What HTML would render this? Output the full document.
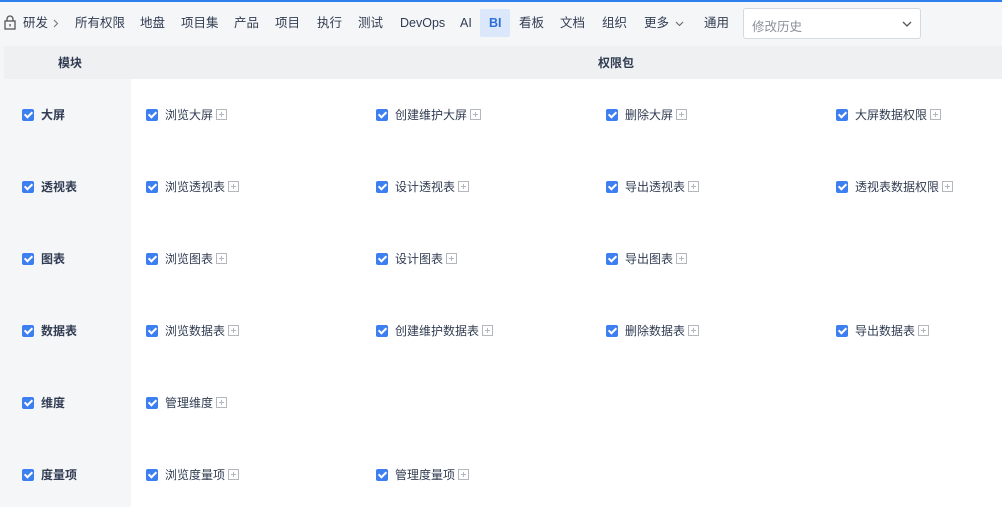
<!DOCTYPE html><html><head><meta charset="utf-8"><style>
*{margin:0;padding:0;box-sizing:border-box}
body{width:1002px;height:507px;overflow:hidden;background:#f5f6f8;font-family:"Liberation Sans","Noto Sans CJK SC",sans-serif;font-size:12px;color:#313c52;position:relative}
.top{position:absolute;left:0;top:0;width:1002px;height:2px;background:#2e7ef0}
.n{position:absolute;top:15px;line-height:16px;font-size:12.5px}
.bi{position:absolute;left:480px;top:9px;width:30px;height:28px;background:#dbe8fb;border-radius:2px}
.dd{position:absolute;left:743px;top:8px;width:178px;height:31px;background:#fff;border:1px solid #d6d9e2;border-radius:3px;color:#8a8f99;padding:7px 8px;font-size:12.5px}
.tbl{position:absolute;left:4px;top:46px;width:998px;height:461px;background:#fff}
.hd{position:absolute;left:0;top:0;width:998px;height:33px;background:#eff0f2;font-weight:bold}
.lc{position:absolute;left:0;top:33px;width:127px;height:428px;background:#f5f6f8}
.i{position:absolute;line-height:16px;white-space:nowrap}
.cb{display:inline-block;width:12px;height:12px;background:#3d7ff0;border-radius:2px;vertical-align:-2px;margin-right:7px;position:relative}
.cb:after{content:"";position:absolute;left:3.5px;top:1px;width:3px;height:6px;border:solid #fff;border-width:0 2px 2px 0;transform:rotate(45deg)}
.p{display:inline-block;width:11px;height:11px;border:1px solid #b4b7bd;vertical-align:-1px;margin-left:3px;position:relative}
.p:before{content:"";position:absolute;left:2px;top:4px;width:5px;height:1px;background:#b4b7bd}
.p:after{content:"";position:absolute;left:4px;top:2px;width:1px;height:5px;background:#b4b7bd}
</style></head><body>
<div class="top"></div>
<svg style="position:absolute;left:4px;top:15px" width="12" height="15" viewBox="0 0 12 15"><rect x="1" y="6" width="10" height="8" fill="none" stroke="#555" stroke-width="1.3"/><path d="M3 6V4a3 3 0 0 1 6 0v2" fill="none" stroke="#555" stroke-width="1.3"/><rect x="5.4" y="9" width="1.3" height="2.5" fill="#555"/></svg>
<div class="n" style="left:23px">研发</div>
<svg style="position:absolute;left:53px;top:19px" width="6" height="9"><path d="M1 1l3.5 3.5L1 8" fill="none" stroke="#777" stroke-width="1.1"/></svg>
<div class="n" style="left:75px">所有权限</div>
<div class="n" style="left:140px">地盘</div>
<div class="n" style="left:181px">项目集</div>
<div class="n" style="left:234px">产品</div>
<div class="n" style="left:275px">项目</div>
<div class="n" style="left:317px">执行</div>
<div class="n" style="left:358px">测试</div>
<div class="n" style="left:400px">DevOps</div>
<div class="n" style="left:460px">AI</div>
<div class="bi"></div>
<div class="n" style="left:489px;font-weight:bold;color:#2e6fd8">BI</div>
<div class="n" style="left:519px">看板</div>
<div class="n" style="left:560px">文档</div>
<div class="n" style="left:602px">组织</div>
<div class="n" style="left:644px">更多</div>
<svg style="position:absolute;left:675px;top:21px" width="9" height="6"><path d="M1 1l3.5 3.5L8 1" fill="none" stroke="#666" stroke-width="1.1"/></svg>
<div class="n" style="left:704px">通用</div>
<div class="dd">修改历史<svg style="position:absolute;right:8px;top:12px" width="10" height="6"><path d="M1 1l4 4 4-4" fill="none" stroke="#555" stroke-width="1.3"/></svg></div>
<div class="tbl">
<div class="hd"><span class="i" style="left:54px;top:9px">模块</span><span class="i" style="left:594px;top:9px">权限包</span></div>
<div class="lc"></div>
</div>
<div id="rows"></div>
<script>
var rows=[["大屏",["浏览大屏","创建维护大屏","删除大屏","大屏数据权限"]],["透视表",["浏览透视表","设计透视表","导出透视表","透视表数据权限"]],["图表",["浏览图表","设计图表","导出图表"]],["数据表",["浏览数据表","创建维护数据表","删除数据表","导出数据表"]],["维度",["管理维度"]],["度量项",["浏览度量项","管理度量项"]]];
var h="";rows.forEach(function(r,k){var y=107+72*k;h+='<div class="i" style="left:22px;top:'+y+'px;font-weight:bold"><span class="cb"></span>'+r[0]+'</div>';r[1].forEach(function(t,j){h+='<div class="i" style="left:'+(146+230*j)+'px;top:'+y+'px"><span class="cb"></span>'+t+'<span class="p"></span></div>';});});
document.getElementById("rows").innerHTML=h;
</script>
</body></html>
